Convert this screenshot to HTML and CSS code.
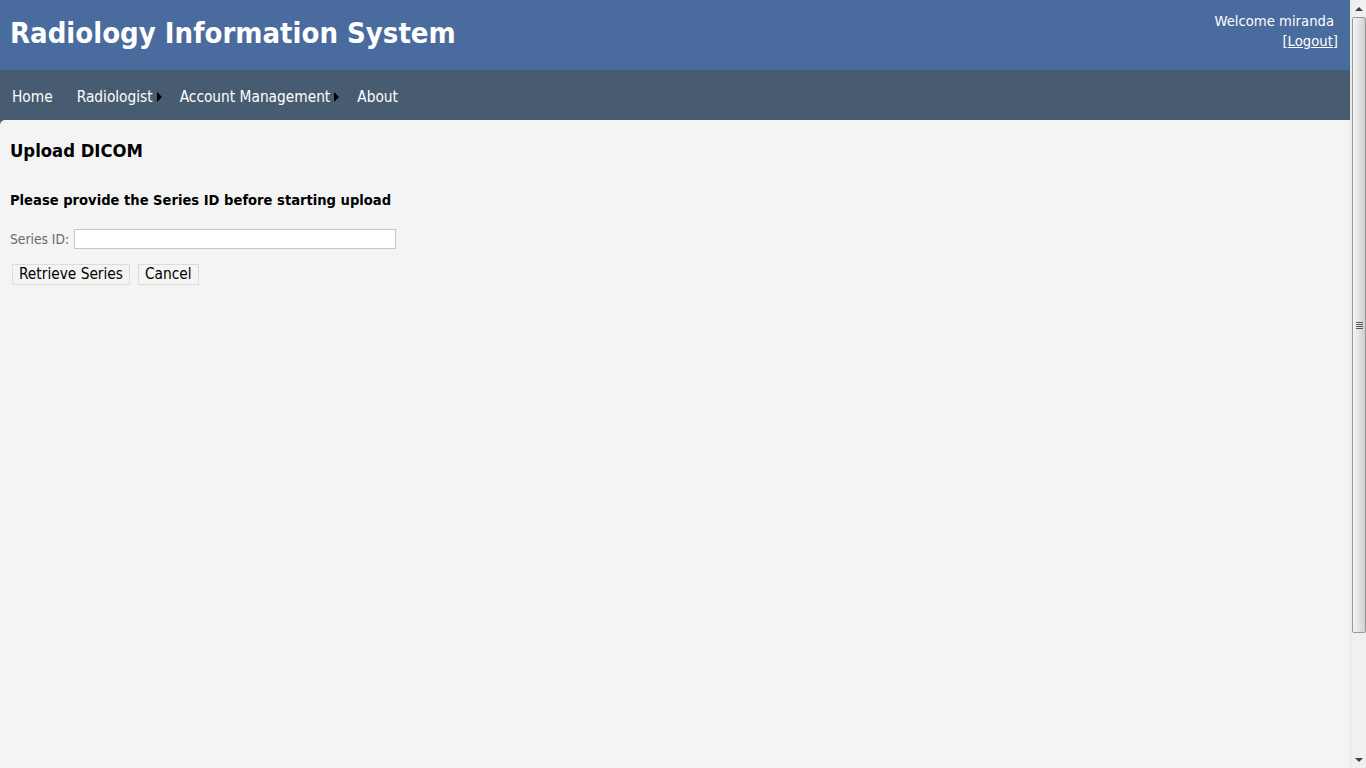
FILE: index.html
```html
<!DOCTYPE html>
<html>
<head>
<meta charset="utf-8">
<title>Radiology Information System</title>
<link rel="stylesheet" href="styles.css">
</head>
<body>
<div class="page">
  <header class="header">
    <h1 class="title">Radiology Information System</h1>
    <div class="user">
      <div class="welcome">Welcome miranda</div>
      <div class="logout">[<a href="#">Logout</a>]</div>
    </div>
  </header>
  <nav class="nav">
    <a class="nav-item" href="#">Home</a>
    <a class="nav-item sub" href="#">Radiologist<span class="arrow"></span></a>
    <a class="nav-item sub" href="#">Account Management<span class="arrow"></span></a>
    <a class="nav-item" href="#">About</a>
  </nav>
  <main class="content">
    <h2 class="heading">Upload DICOM</h2>
    <h3 class="subheading">Please provide the Series ID before starting upload</h3>
    <div class="field">
      <label class="label" for="sid">Series ID:</label>
      <input class="input" id="sid" type="text">
    </div>
    <div class="buttons">
      <button class="btn">Retrieve Series</button>
      <button class="btn">Cancel</button>
    </div>
  </main>
</div>
<div class="scrollbar">
  <div class="sb-btn"><span class="tri up"></span></div>
  <div class="sb-track">
    <div class="sb-thumb"><span class="grip"></span></div>
  </div>
  <div class="sb-btn"><span class="tri down"></span></div>
</div>
</body>
</html>
```

FILE: styles.css
```css
html, body {
  margin: 0;
  padding: 0;
  height: 100%;
  overflow: hidden;
}
body {
  background: #f4f4f4;
  font-family: "DejaVu Sans Condensed", "DejaVu Sans", sans-serif;
}
.page {
  width: 1350px;
  min-height: 768px;
  display: flex;
  flex-direction: column;
  background: #475c70;
}
.header {
  height: 70px;
  background: #4a6b9e;
  display: flex;
  justify-content: space-between;
  align-items: flex-start;
  box-sizing: border-box;
  padding: 0 12px 0 10px;
}
.title {
  margin: 13px 0 0 0;
  font-size: 29px;
  font-weight: bold;
  color: #ffffff;
  line-height: 40px;
}
.user {
  margin-top: 11px;
  color: #ffffff;
  font-size: 14.7px;
  line-height: 20px;
  text-align: right;
}
.welcome { padding-right: 4px; }
.logout a { color: #ffffff; text-decoration: underline; }
.nav {
  height: 50px;
  display: flex;
  align-items: center;
  padding-left: 12px;
}
.nav-item {
  color: #ffffff;
  text-decoration: none;
  font-size: 15.3px;
  display: flex;
  align-items: center;
  padding-top: 3px;
  margin-right: 24px;
}
.nav-item.sub { margin-right: 18px; }
.arrow {
  width: 0;
  height: 0;
  border-top: 5px solid transparent;
  border-bottom: 5px solid transparent;
  border-left: 5px solid #000;
  margin-left: 4px;
}
.content {
  flex: 1;
  background: #f4f4f4;
  border-top-left-radius: 5px;
  padding: 19px 10px 0 10px;
}
.heading {
  margin: 0;
  font-size: 18.3px;
  font-weight: bold;
  color: #000;
  line-height: 24px;
}
.subheading {
  margin: 27px 0 0 0;
  font-size: 14.6px;
  font-weight: bold;
  color: #000;
  line-height: 20px;
}
.field {
  margin-top: 19px;
  display: flex;
  align-items: center;
  gap: 5px;
}
.label {
  color: #6a6a6a;
  font-size: 13.7px;
}
.input {
  width: 322px;
  height: 20px;
  box-sizing: border-box;
  border: 1px solid #c6c6c6;
  background: #fff;
  margin: 0;
  padding: 0 2px;
}
.buttons {
  margin-top: 15px;
  display: flex;
  gap: 8px;
  padding-left: 2px;
}
.btn {
  font-family: inherit;
  font-size: 15.3px;
  color: #000;
  background: #f4f4f4;
  border: 1px solid #e0dcd4;
  height: 21px;
  padding: 0 6px;
  margin: 0;
  line-height: 19px;
}
.scrollbar {
  position: fixed;
  top: 0;
  right: 0;
  width: 16px;
  height: 768px;
  background: #f0f0f0;
  border-left: 1px solid #e4e4e4;
  display: flex;
  flex-direction: column;
  box-sizing: border-box;
}
.sb-btn {
  height: 17px;
  display: flex;
  align-items: center;
  justify-content: center;
}
.tri {
  width: 0;
  height: 0;
  border-left: 4px solid transparent;
  border-right: 4px solid transparent;
}
.tri.up { border-bottom: 4px solid #404040; }
.tri.down { border-top: 4px solid #404040; }
.sb-track {
  flex: 1;
  display: flex;
  flex-direction: column;
}
.sb-thumb {
  height: 616px;
  margin: 0 0 0 1px;
  border: 1px solid #9a9a9a;
  border-radius: 2px;
  background: linear-gradient(to right, #f4f4f4, #e4e4e4 50%, #cfcfcf);
  display: flex;
  align-items: center;
  justify-content: center;
  box-sizing: border-box;
}
.grip {
  width: 7px;
  height: 7px;
  background: repeating-linear-gradient(to bottom, #555 0 1px, transparent 1px 2px);
}
```
